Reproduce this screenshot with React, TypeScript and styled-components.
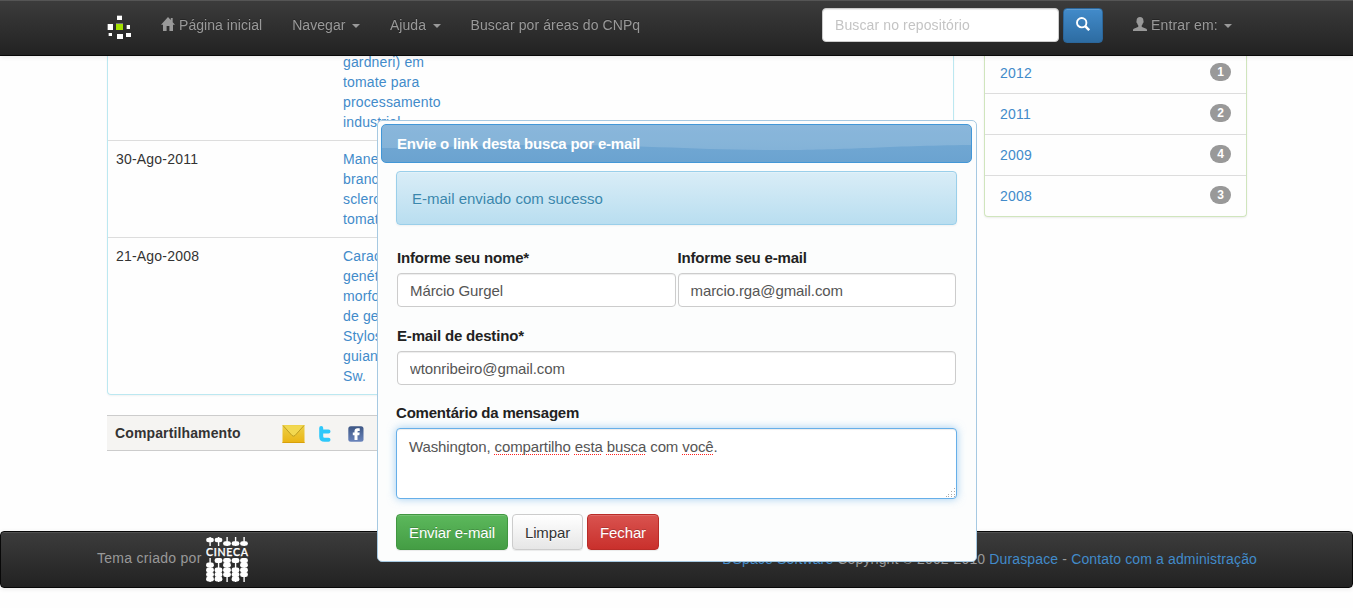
import React from 'react';
import styled, { createGlobalStyle } from 'styled-components';

const Global = createGlobalStyle`
  * { box-sizing: border-box; }
  html, body { margin: 0; height: 608px; overflow: hidden; background: #fefefe; }
  body { font: 14px/20px "Liberation Sans", Arial, sans-serif; color: #333; }
`;

const Page = styled.div`
  position: relative;
  width: 1353px;
  height: 608px;
  padding-top: 52px;
  overflow: hidden;
`;

const Link = styled.a`
  color: #428bca;
  text-decoration: none;
`;

/* ---------- top bar ---------- */

const NavBar = styled.header`
  position: fixed;
  top: 0;
  left: 0;
  width: 1353px;
  height: 56px;
  z-index: 5;
  display: flex;
  align-items: flex-start;
  padding-left: 107px;
  background: linear-gradient(#3c3c3c, #222);
  border-bottom: 1px solid #080808;
  box-shadow: inset 0 1px 0 #555, 0 1px 5px rgba(0, 0, 0, 0.09);
`;

const Brand = styled.a`
  display: flex;
  width: 39px;
  padding-top: 15px;
`;

const NavItem = styled.a<{ $spacing?: string }>`
  display: flex;
  align-items: center;
  padding: 15px;
  height: 50px;
  color: #999;
  letter-spacing: ${(p) => p.$spacing ?? '0.05px'};
  text-shadow: 0 -1px 0 rgba(0, 0, 0, 0.25);
  white-space: pre;
  svg { margin-right: 4px; margin-top: -2px; }
`;

const Caret = styled.span`
  width: 8px;
  height: 4px;
  margin: 2px 0 0 6.5px;
  border: 4px solid transparent;
  border-top-color: #999;
  border-bottom: 0;
`;

const SearchForm = styled.form`
  display: flex;
  gap: 4px;
  margin: 8px 15px 0 auto;
`;

const SearchInput = styled.input`
  width: 237px;
  height: 34px;
  padding: 6px 12px;
  font: 14px/20px "Liberation Sans", Arial, sans-serif;
  letter-spacing: 0.12px;
  border: 1px solid #ccc;
  border-radius: 4px;
  box-shadow: inset 0 1px 1px rgba(0, 0, 0, 0.075);
  &::placeholder { color: #c4c4c4; opacity: 1; }
`;

const SearchButton = styled.button`
  display: flex;
  align-items: center;
  justify-content: center;
  width: 40px;
  height: 35px;
  padding: 0 0 3px;
  border: 1px solid #2b669a;
  border-radius: 4px;
  background: linear-gradient(#428bca, #2d6ca2);
  box-shadow: inset 0 1px 0 rgba(255, 255, 255, 0.15);
`;

const UserSlot = styled.div`
  width: 235px;
  display: flex;
`;

/* ---------- page body ---------- */

const Columns = styled.main`
  display: flex;
  align-items: flex-start;
  gap: 30px;
  height: 479px;
  padding-left: 107px;
`;

const Results = styled.section`
  width: 847px;
`;

const ResultPanel = styled.div`
  border: 1px solid #bce8f1;
  border-top: 0;
  border-radius: 0 0 4px 4px;
  box-shadow: 0 1px 2px rgba(0, 0, 0, 0.05);
`;

const ResultRow = styled.div`
  display: flex;
  & + & { border-top: 1px solid #ddd; }
`;

const DateCell = styled.div`
  width: 227px;
  padding: 8px;
  letter-spacing: 0.2px;
`;

const TitleCell = styled.div<{ $flush?: boolean }>`
  width: 140px;
  padding: ${(p) => (p.$flush ? '0' : '8px')} 8px 8px;
  letter-spacing: 0.15px;
  white-space: nowrap;
  a { display: block; }
`;

const ShareBar = styled.div`
  display: flex;
  align-items: center;
  height: 36px;
  margin-top: 20px;
  padding-left: 8px;
  background: #f5f4f2;
  border: solid #ccc;
  border-width: 1px 0;
  color: #333;
  font-weight: bold;
  letter-spacing: 0.13px;
`;

const ShareLabel = styled.span`
  width: 167px;
`;

const ShareIcons = styled.div`
  display: flex;
  align-items: flex-start;
  padding-top: 2px;
  svg:nth-child(2) { margin: 1px 17px 0 14px; }
  svg:nth-child(3) { margin-top: 1px; }
`;

const YearList = styled.aside`
  width: 263px;
  border: 1px solid #d0e5bd;
  border-top-color: #ddd;
  border-radius: 0 0 4px 4px;
  box-shadow: 0 1px 2px rgba(0, 0, 0, 0.075);
  letter-spacing: 0.2px;
`;

const YearRow = styled.div`
  display: flex;
  justify-content: space-between;
  align-items: center;
  height: 41px;
  padding: 0 15px;
  border-bottom: 1px solid #ddd;
  &:last-child { border-bottom: 0; height: 40px; }
`;

const Badge = styled.span`
  min-width: 21px;
  height: 18px;
  margin-top: -2px;
  border-radius: 10px;
  background: #999;
  color: #fff;
  font-size: 12px;
  font-weight: bold;
  letter-spacing: 0;
  line-height: 18px;
  text-align: center;
`;

/* ---------- footer ---------- */

const Footer = styled.footer`
  display: flex;
  align-items: center;
  height: 57px;
  padding: 0 95px 0 96px;
  border: 1px solid #080808;
  border-radius: 4px;
  background: linear-gradient(#3c3c3c, #222);
  box-shadow: inset 0 1px 0 #505050, 0 1px 5px rgba(0, 0, 0, 0.09);
  color: #999;
`;

const Credit = styled.span`
  width: 109px;
  padding-bottom: 4px;
  letter-spacing: 0.28px;
`;

const Copyright = styled.p`
  margin: 0 0 2px auto;
  letter-spacing: 0.14px;
`;

/* ---------- dialog ---------- */

const Dialog = styled.section`
  position: absolute;
  z-index: 3;
  left: 377px;
  top: 120px;
  width: 600px;
  height: 442px;
  padding: 3px 4px 0 3px;
  border: 1px solid #a6c9e2;
  border-radius: 5px;
  background: #fcfdfd;
  color: #222;
  font-size: 15px;
`;

const TitleBar = styled.div`
  position: relative;
  display: flex;
  align-items: center;
  height: 39px;
  padding: 0 15px;
  border: 1px solid #4297d7;
  border-radius: 5px;
  overflow: hidden;
  background: linear-gradient(#76abd5, #6ba3d0);
  color: #fff;
  font-weight: bold;
  letter-spacing: -0.2px;
`;

const Gloss = styled.svg`
  position: absolute;
  inset: 0;
`;

const TitleText = styled.span`
  position: relative;
`;

const DialogBody = styled.div`
  display: flex;
  flex-direction: column;
  padding: 8px 15px 0 15px;
`;

const Alert = styled.div`
  height: 54px;
  padding: 17px 15px;
  border: 1px solid #9acfea;
  border-radius: 4px;
  background: linear-gradient(#d9edf7, #b9def0);
  box-shadow: inset 0 1px 0 rgba(255, 255, 255, 0.25), 0 1px 2px rgba(0, 0, 0, 0.05);
  color: #3a87ad;
  text-shadow: 0 1px 0 rgba(255, 255, 255, 0.2);
`;

const FieldRow = styled.div<{ $top: number }>`
  display: flex;
  gap: 2px;
  margin: ${(p) => p.$top}px 1px 0;
`;

const Field = styled.label`
  flex: 1;
  display: flex;
  flex-direction: column;
  gap: 5px;
  font-weight: bold;
  letter-spacing: -0.18px;
`;

const TextInput = styled.input`
  width: 100%;
  height: 34px;
  padding: 6px 12px;
  border: 1px solid #ccc;
  border-radius: 4px;
  background: #fff;
  box-shadow: inset 0 1px 1px rgba(0, 0, 0, 0.075);
  color: #555;
  font: 15px/20px "Liberation Sans", Arial, sans-serif;
  letter-spacing: -0.1px;
`;

const MessageLabel = styled.div`
  margin: 18px 0 5px;
  font-weight: bold;
  letter-spacing: -0.2px;
`;

const Message = styled.div`
  display: flex;
  justify-content: space-between;
  height: 71px;
  padding: 8px 0 0 12px;
  border: 1px solid #66afe9;
  border-radius: 4px;
  background: #fff;
  box-shadow: inset 0 1px 1px rgba(0, 0, 0, 0.075), 0 0 8px rgba(102, 175, 233, 0.6);
  color: #555;
  letter-spacing: -0.12px;
  svg { align-self: flex-end; margin-bottom: -1px; }
`;

const Misspelt = styled.span`
  text-decoration: underline dotted #f22 1px;
  text-decoration-skip-ink: none;
  text-underline-offset: 2px;
`;

const Actions = styled.div`
  display: flex;
  gap: 4px;
  margin-top: 15px;
`;

const Button = styled.button<{ $from: string; $to: string; $edge: string; $w: number; $dark?: boolean }>`
  width: ${(p) => p.$w}px;
  height: 36px;
  padding: 2px 0 0;
  border: 1px solid ${(p) => p.$edge};
  border-radius: 4px;
  background: linear-gradient(${(p) => p.$from}, ${(p) => p.$to});
  box-shadow: inset 0 1px 0 rgba(255, 255, 255, 0.15), 0 1px 1px rgba(0, 0, 0, 0.075);
  color: ${(p) => (p.$dark ? '#333' : '#fff')};
  text-shadow: ${(p) => (p.$dark ? '0 1px 0 #fff' : '0 -1px 0 rgba(0, 0, 0, 0.2)')};
  font: 15px/20px "Liberation Sans", Arial, sans-serif;
  letter-spacing: -0.12px;
  white-space: nowrap;
`;

/* ---------- drawings ---------- */

const DSpaceLogo = () => (
  <svg width="25" height="26" viewBox="0 0 25 26" shapeRendering="crispEdges">
    <g fill="#777">
      <rect x="10" y="0" width="5" height="1" />
      <rect x="9" y="8" width="7" height="1" />
      <rect x="0" y="9" width="1" height="6" />
      <rect x="19" y="10" width="1" height="4" />
      <rect x="1" y="18" width="1" height="3" />
      <rect x="19" y="18" width="5" height="1" />
    </g>
    <g fill="#fff">
      <rect x="10" y="1" width="5" height="4" />
      <rect x="1" y="9" width="5" height="6" />
      <rect x="20" y="10" width="3" height="4" />
      <rect x="2" y="18" width="3" height="3" />
      <rect x="10" y="19" width="6" height="5" />
      <rect x="19" y="18" width="5" height="4" />
    </g>
    <rect x="9" y="9" width="7" height="6" fill="#a3e200" />
  </svg>
);

const HomeIcon = () => (
  <svg width="14" height="14" viewBox="0 0 14 14" fill="#999">
    <path d="M7 0 0 7.700h2V14h3.600V9h2.800v5H12V7.700h2L11.700 5.200V1H9.800v2.100z" />
  </svg>
);

const UserIcon = () => (
  <svg width="14" height="14" viewBox="0 0 14 14" fill="#999">
    <path d="M7 0c2.200 0 3.400 1.400 3.400 3.500 0 .6.300 1 .2 1.500 0 .6-.5.8-.7 1.200C9.600 7.300 9 8.200 8.600 8.700c0 .8.300 1.200 1 1.500l3.100 1.200c.9.400 1.300.8 1.300 1.600v1H0v-1c0-.8.400-1.200 1.300-1.600l3.100-1.200c.7-.3 1-.7 1-1.500C5 8.200 4.400 7.300 4.100 6.200c-.2-.4-.7-.6-.7-1.200-.1-.5.200-.9.200-1.500C3.600 1.400 4.800 0 7 0z" />
  </svg>
);

const SearchIcon = () => (
  <svg width="14" height="14" viewBox="0 0 14 14" fill="none" stroke="#fff">
    <circle cx="5.700" cy="5.700" r="4.700" strokeWidth="1.900" />
    <path d="M9.200 9.200 13.200 13.200" strokeWidth="2.500" />
  </svg>
);

const MailIcon = () => (
  <svg width="23" height="18" viewBox="0 0 23 18">
    <defs>
      <linearGradient id="mail" x1="0" y1="0" x2="0" y2="1">
        <stop offset="0" stopColor="#ecd048" />
        <stop offset="1" stopColor="#eab414" />
      </linearGradient>
    </defs>
    <rect x=".5" y="0" width="22" height="18" fill="url(#mail)" />
    <path d="M1 .5 10 10.500q1.500 1.300 3 0L22 .5" fill="#f2d850" stroke="#b8981f" strokeWidth=".9" />
    <path d="M.5 17.500h22" stroke="#d8a00a" />
  </svg>
);

const TwitterIcon = () => (
  <svg width="12" height="16" viewBox="0 0 12 16">
    <path d="M2.200 2v8.500q0 3.300 3.300 3.300H9.500M2.200 5.500h7.300" fill="none" stroke="#2ec8fa" strokeWidth="4" strokeLinecap="round" />
  </svg>
);

const FacebookIcon = () => (
  <svg width="16" height="16" viewBox="0 0 16 16">
    <defs>
      <linearGradient id="fb" x1="0" y1="0" x2="0" y2="1">
        <stop offset="0" stopColor="#3d5684" />
        <stop offset="1" stopColor="#6a84bb" />
      </linearGradient>
    </defs>
    <rect x=".3" y=".3" width="15.200" height="15.400" rx="2.500" fill="url(#fb)" />
    <path d="M6.500 14V9.300H4.800V6.500h1.700V5.300c0-2.100 1.100-3.100 3-3.100h2.200v2.700h-1.200c-.8 0-1 .3-1 1v.6h2.200l-.4 2.800H9.500V14z" fill="#fff" />
  </svg>
);

const columnX = [4, 12.5, 21, 29.5, 38];
const topDiscs = [3, 3, 6.5, 6.5, 6.5];
const lowerDiscs = [
  [28, 33, 37.5, 42],
  [23.5, 33, 37.5, 42],
  [23.5, 28, 33, 37.5],
  [23.5, 33, 37.5, 42],
  [23.5, 28, 33, 37.5],
];

const CinecaLogo = () => (
  <svg width="43" height="46" viewBox="0 0 43 46" fill="#fff">
    {columnX.map((x, i) => (
      <g key={x}>
        <rect x={x - 0.6} y="0" width="1.4" height="9" />
        <rect x={x - 3.9} y={topDiscs[i] - 2.3} width="7.8" height="4.6" rx="2.3" />
        <rect x={x - 0.6} y="21" width="1.4" height="24" />
        {lowerDiscs[i].map((y) => (
          <rect key={y} x={x - 3.9} y={y - 2.5} width="7.8" height="5" rx="2.3" />
        ))}
      </g>
    ))}
    <text x="0" y="19" fontFamily="Lato, sans-serif" fontWeight="600" fontSize="10.600" stroke="#fff" strokeWidth=".25" textLength="42">
      CINECA
    </text>
  </svg>
);

const ResizeGrip = () => (
  <svg width="11" height="11" viewBox="0 0 11 11" fill="#aaa" shapeRendering="crispEdges">
    {[[9, 0], [9, 3], [6, 3], [9, 6], [6, 6], [3, 6], [9, 8], [6, 8], [3, 8], [1, 8]].map(([x, y]) => (
      <rect key={`${x}-${y}`} x={x} y={y} width="1" height="1" />
    ))}
  </svg>
);

const rows = [
  { date: '', flush: true, lines: ['gardneri) em', 'tomate para', 'processamento', 'industrial.'] },
  { date: '30-Ago-2011', lines: ['Manejo', 'branco', 'sclero', 'tomate'] },
  { date: '21-Ago-2008', lines: ['Caract', 'genétic', 'morfol', 'de ger', 'Stylos', 'guiane', 'Sw.'] },
];

const years = [
  ['2012', 1],
  ['2011', 2],
  ['2009', 4],
  ['2008', 3],
];

export default function App() {
  return (
    <Page>
      <Global />
      <NavBar>
        <Brand><DSpaceLogo /></Brand>
        <NavItem><HomeIcon />Página inicial</NavItem>
        <NavItem>Navegar<Caret /></NavItem>
        <NavItem>Ajuda<Caret /></NavItem>
        <NavItem $spacing="0.1px">Buscar por áreas do CNPq</NavItem>
        <SearchForm>
          <SearchInput placeholder="Buscar no repositório" />
          <SearchButton type="button"><SearchIcon /></SearchButton>
        </SearchForm>
        <UserSlot>
          <NavItem $spacing="0.15px"><UserIcon />Entrar em:<Caret /></NavItem>
        </UserSlot>
      </NavBar>

      <Columns>
        <Results>
          <ResultPanel>
            {rows.map((row) => (
              <ResultRow key={row.lines[0]}>
                <DateCell>{row.date}</DateCell>
                <TitleCell $flush={row.flush}>
                  {row.lines.map((line) => <Link key={line}>{line}</Link>)}
                </TitleCell>
              </ResultRow>
            ))}
          </ResultPanel>
          <ShareBar>
            <ShareLabel>Compartilhamento</ShareLabel>
            <ShareIcons>
              <MailIcon />
              <TwitterIcon />
              <FacebookIcon />
            </ShareIcons>
          </ShareBar>
        </Results>
        <YearList>
          {years.map(([year, count]) => (
            <YearRow key={year}><Link>{year}</Link><Badge>{count}</Badge></YearRow>
          ))}
        </YearList>
      </Columns>

      <Footer>
        <Credit>Tema criado por</Credit>
        <CinecaLogo />
        <Copyright>
          <Link>DSpace Software</Link> Copyright © 2002-2010 <Link>Duraspace</Link> - <Link>Contato com a administração</Link>
        </Copyright>
      </Footer>

      <Dialog>
        <TitleBar>
          <Gloss width="590" height="37" viewBox="0 0 590 37">
            <path d="M0 0H590V20C500 21 470 25 400 25C300 25 240 18 130 20C70 21 50 23 0 23Z" fill="#fff" fillOpacity=".15" />
          </Gloss>
          <TitleText>Envie o link desta busca por e-mail</TitleText>
        </TitleBar>
        <DialogBody>
          <Alert>E-mail enviado com sucesso</Alert>
          <FieldRow $top={23}>
            <Field>Informe seu nome*<TextInput defaultValue="Márcio Gurgel" /></Field>
            <Field>Informe seu e-mail<TextInput defaultValue="marcio.rga@gmail.com" /></Field>
          </FieldRow>
          <FieldRow $top={19}>
            <Field>E-mail de destino*<TextInput defaultValue="wtonribeiro@gmail.com" /></Field>
          </FieldRow>
          <MessageLabel>Comentário da mensagem</MessageLabel>
          <Message>
            <span>
              Washington, <Misspelt>compartilho</Misspelt> <Misspelt>esta</Misspelt> <Misspelt>busca</Misspelt> com <Misspelt>você</Misspelt>.
            </span>
            <ResizeGrip />
          </Message>
          <Actions>
            <Button $w={112} $from="#5cb85c" $to="#449d44" $edge="#419641">Enviar e-mail</Button>
            <Button $w={71} $from="#fff" $to="#e6e6e6" $edge="#ccc" $dark>Limpar</Button>
            <Button $w={72} $from="#d9534f" $to="#c9302c" $edge="#b92c28">Fechar</Button>
          </Actions>
        </DialogBody>
      </Dialog>
    </Page>
  );
}
